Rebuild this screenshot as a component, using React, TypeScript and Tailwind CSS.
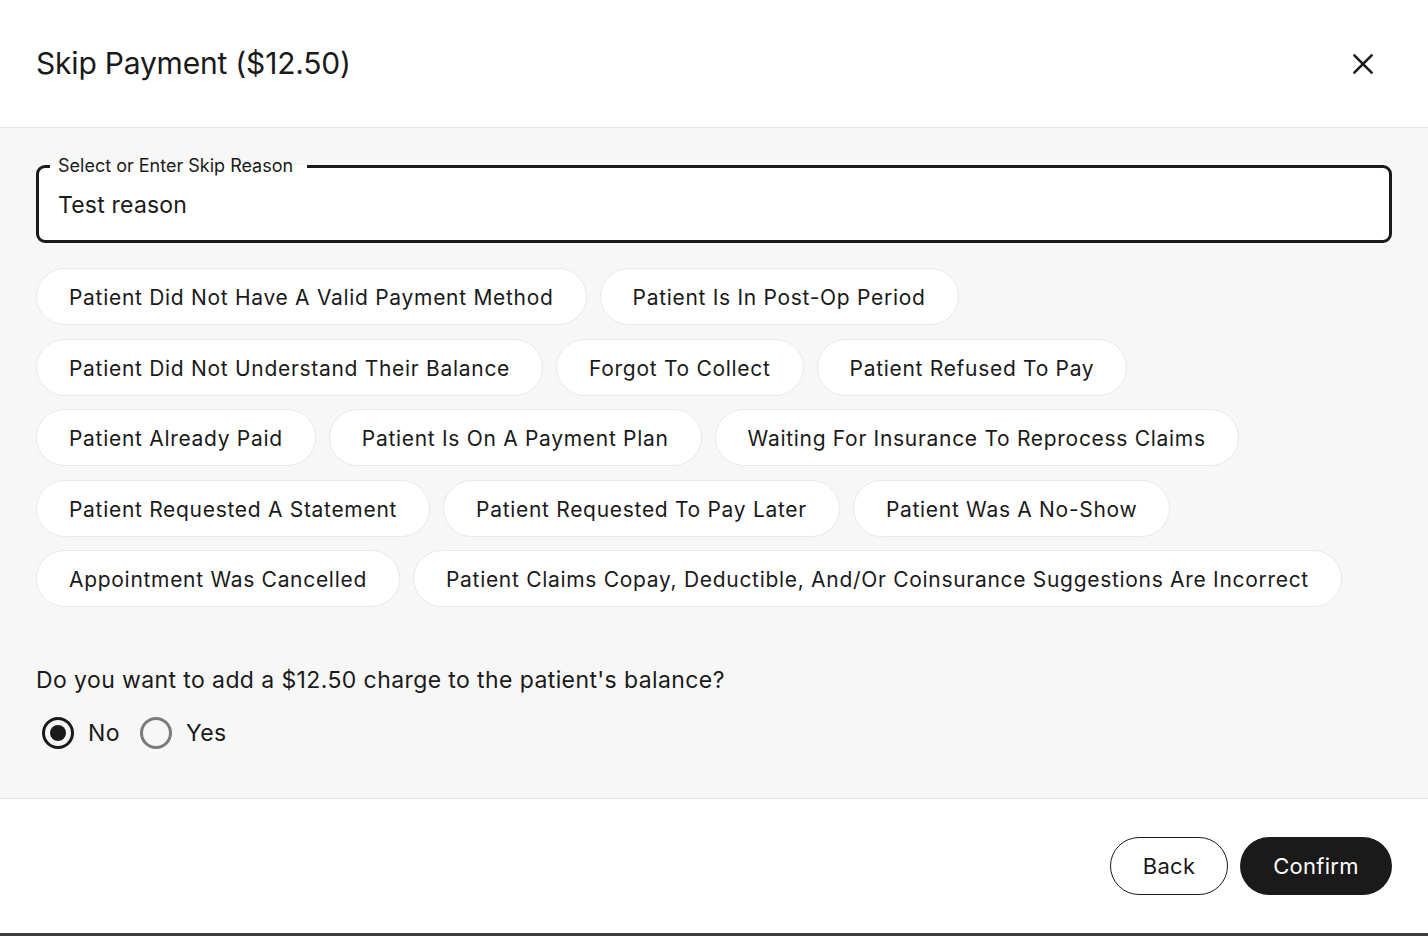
import React, { useState } from "react";

const reasons = [
  "Patient Did Not Have A Valid Payment Method",
  "Patient Is In Post-Op Period",
  "Patient Did Not Understand Their Balance",
  "Forgot To Collect",
  "Patient Refused To Pay",
  "Patient Already Paid",
  "Patient Is On A Payment Plan",
  "Waiting For Insurance To Reprocess Claims",
  "Patient Requested A Statement",
  "Patient Requested To Pay Later",
  "Patient Was A No-Show",
  "Appointment Was Cancelled",
  "Patient Claims Copay, Deductible, And/Or Coinsurance Suggestions Are Incorrect",
];

function Radio({ checked, label }: { checked: boolean; label: string }) {
  return (
    <label className="flex items-center gap-[14px] cursor-pointer">
      <span
        className={
          checked
            ? "flex h-[32px] w-[32px] items-center justify-center rounded-full border-[3px] border-[#1a1a1a]"
            : "flex h-[32px] w-[32px] items-center justify-center rounded-full border-[3px] border-[#7a7a7a]"
        }
      >
        {checked && <span className="h-[16px] w-[16px] rounded-full bg-[#1a1a1a]" />}
      </span>
      <span className="text-[23px] tracking-[0.4px] text-[#1a1a1a]">{label}</span>
    </label>
  );
}

export default function App() {
  const [charge, setCharge] = useState(false);

  return (
    <div className="flex h-[936px] w-[1428px] flex-col bg-white font-['Inter',sans-serif] text-[#1a1a1a]">
      {/* header */}
      <div className="flex h-[128px] shrink-0 items-center justify-between border-b border-[#e6e6e6] pl-[36px] pr-[52px]">
        <h1 className="text-[30px] font-normal tracking-[-0.2px]">Skip Payment ($12.50)</h1>
        <button className="text-[#1a1a1a]">
          <svg width="26" height="26" viewBox="0 0 24 24" fill="none" stroke="currentColor" strokeWidth="2.4" strokeLinecap="round">
            <path d="M4 4L20 20M20 4L4 20" />
          </svg>
        </button>
      </div>

      {/* body */}
      <div className="flex flex-1 flex-col bg-[#f7f7f7] px-[36px] pt-[28px]">
        <fieldset className="h-[87px] rounded-[9px] border-[3px] border-[#1a1a1a] bg-white px-[19px]">
          <legend className="-ml-[8px] pl-[8px] pr-[14px] text-[18px] leading-[20px] text-[#1a1a1a]">
            Select or Enter Skip Reason
          </legend>
          <div className="pt-[15px] text-[23px] leading-[28px] tracking-[0.2px] text-[#1a1a1a]">Test reason</div>
        </fieldset>

        <div className="mt-[25px] flex flex-wrap gap-x-[13px] gap-y-[13.5px]">
          {reasons.map((r) => (
            <button
              key={r}
              className="h-[57px] rounded-full border border-[#e9e9e9] bg-white px-[32px] pt-[3px] text-[21px] tracking-[0.7px] text-[#1a1a1a]"
            >
              {r}
            </button>
          ))}
        </div>

        <p className="mt-[56px] text-[23px] tracking-[0.4px] text-[#1a1a1a]">
          Do you want to add a $12.50 charge to the patient's balance?
        </p>
        <div className="mt-[18px] flex items-center gap-[20px] pl-[6px]" onClick={() => setCharge(!charge)}>
          <Radio checked={!charge} label="No" />
          <Radio checked={charge} label="Yes" />
        </div>
      </div>

      {/* footer */}
      <div className="flex h-[135px] shrink-0 items-center justify-end gap-[12px] border-t border-[#e6e6e6] px-[36px]">
        <button className="h-[58px] w-[118px] rounded-full border border-[#1a1a1a] bg-white text-[22px] tracking-[0.3px] text-[#1a1a1a]">
          Back
        </button>
        <button className="h-[58px] w-[152px] rounded-full bg-[#1a1a1a] text-[22px] tracking-[0.3px] text-white">
          Confirm
        </button>
      </div>
      <div className="h-[3px] shrink-0 bg-[#3c3c3c]" />
    </div>
  );
}
